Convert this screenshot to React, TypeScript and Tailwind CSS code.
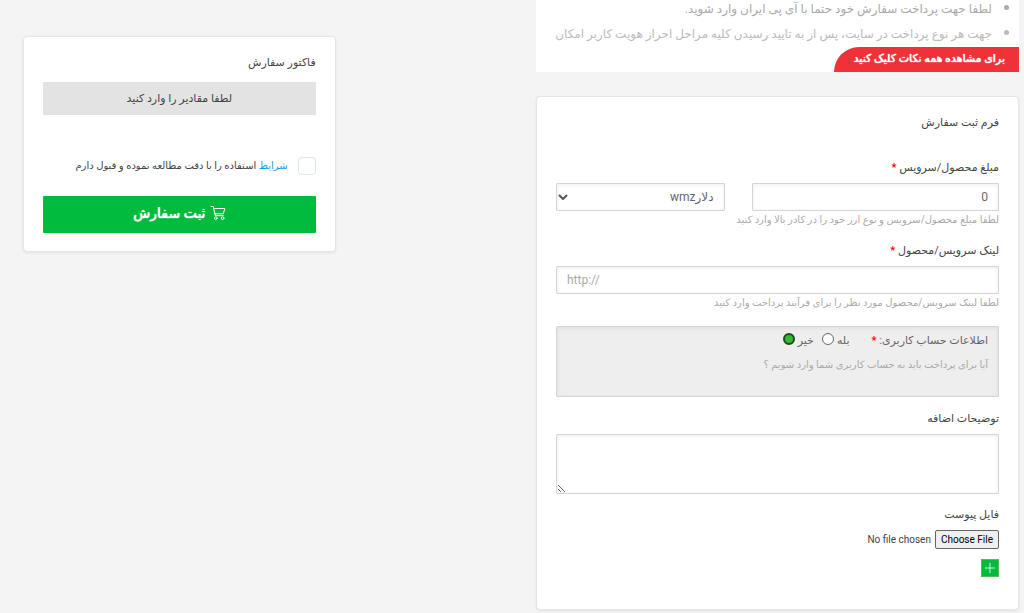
import { useState } from 'react';
import type { ReactNode } from 'react';

const notes = [
    'لطفا جهت پرداخت سفارش خود حتما با آی پی ایران وارد شوید.',
    'جهت هر نوع پرداخت در سایت، پس از به تایید رسیدن کلیه مراحل احراز هویت کاربر امکان',
];

const fieldClass =
    'block h-7 w-full rounded-[1px] border border-[#d5d5d5] bg-white px-[10px] text-xs text-[#666] shadow-[inset_0_1px_4px_rgba(0,0,0,0.07)] outline-none placeholder:text-[#aaa]';

interface FieldLabelProps {
    htmlFor: string;
    required?: boolean;
    children: ReactNode;
}

function FieldLabel({ htmlFor, required, children }: FieldLabelProps) {
    return (
        <label htmlFor={htmlFor} className="block w-fit text-[11px] leading-5 text-[#444]">
            {children}
            {required && <span className="font-bold text-[#f00]"> *</span>}
        </label>
    );
}

function HelpText({ children }: { children: ReactNode }) {
    return <p className="text-[10px] leading-[18px] whitespace-nowrap text-[#aaa]">{children}</p>;
}

function CartIcon() {
    return (
        <svg
            viewBox="0 0 16 16"
            className="h-4 w-4"
            fill="none"
            stroke="currentColor"
            strokeLinecap="round"
            strokeLinejoin="round"
            aria-hidden="true"
        >
            <path d="M1 1.5h2.2l2.1 9.2h8" />
            <path d="M3.7 3.5h11l-1.3 5.3H4.9" />
            <circle cx="5.8" cy="13.2" r="1.3" />
            <circle cx="12.6" cy="13.2" r="1.3" />
        </svg>
    );
}

function Notes() {
    return (
        <section className="flex flex-col bg-white">
            <ul className="list-disc pr-[27px] pb-px text-xs leading-6 text-[#aaa] marker:text-base">
                {notes.map((note, index) => (
                    <li key={note} className={index === 0 ? '-mt-1' : 'text-[#bbb]'}>
                        <span className="whitespace-nowrap">{note}</span>
                    </li>
                ))}
            </ul>
            <button
                type="button"
                className="h-[25px] w-[185px] rounded-tl-[26px] bg-[#ef3237] pr-[14px] text-right text-[11px] whitespace-nowrap text-white [text-shadow:0_0_1px_#fff,0_0_1px_#fff]"
            >
                برای مشاهده همه نکات کلیک کنید
            </button>
        </section>
    );
}

function OrderForm() {
    const [needsLogin, setNeedsLogin] = useState('no');

    return (
        <form className="mt-6 rounded-sm border border-[#e6e6e6] bg-white px-[19px] pt-4 pb-8 shadow-[0_1px_3px_rgba(0,0,0,0.08)]">
            <h2 className="text-[11px] leading-5 text-[#444]">فرم ثبت سفارش</h2>

            <div className="mt-[25px]">
                <FieldLabel htmlFor="amount" required>
                    مبلغ محصول/سرویس
                </FieldLabel>
                <div className="mt-[5px] flex gap-[27px]">
                    <div className="flex-[248]">
                        <input id="amount" type="text" defaultValue="0" className={fieldClass} />
                    </div>
                    <div className="relative flex-[169]">
                        <select aria-label="نوع ارز" className={`${fieldClass} appearance-none`}>
                            <option>دلارwmz</option>
                        </select>
                        <svg
                            viewBox="0 0 10 6"
                            className="pointer-events-none absolute top-[11px] left-[2px] h-[6px] w-[10px]"
                            fill="none"
                            stroke="#555"
                            strokeWidth="2"
                            aria-hidden="true"
                        >
                            <path d="M1 1l4 4 4-4" />
                        </svg>
                    </div>
                </div>
                <HelpText>لطفا مبلغ محصول/سرویس و نوع ارز خود را در کادر بالا وارد کنید</HelpText>
            </div>

            <div className="mt-3">
                <FieldLabel htmlFor="link" required>
                    لینک سرویس/محصول
                </FieldLabel>
                <input id="link" type="text" dir="ltr" placeholder="http://" className={`${fieldClass} mt-[5px]`} />
                <HelpText>لطفا لینک سرویس/محصول مورد نظر را برای فرآیند پرداخت وارد کنید</HelpText>
            </div>

            <div className="mt-[14px] rounded-[1px] border border-[#d5d5d5] bg-[#eee] px-[10px] pt-1 pb-[21px] shadow-[inset_0_1px_4px_rgba(0,0,0,0.07)]">
                <div className="flex items-center text-[11px] leading-5 text-[#666]">
                    <span className="ml-[22px]">
                        اطلاعات حساب کاربری: <span className="font-bold text-[#f00]">*</span>
                    </span>
                    {[
                        { value: 'yes', label: 'بله' },
                        { value: 'no', label: 'خیر' },
                    ].map((option) => (
                        <label key={option.value} className="ml-2 flex items-center gap-[3px]">
                            {option.label}
                            <input
                                type="radio"
                                name="needsLogin"
                                value={option.value}
                                checked={needsLogin === option.value}
                                onChange={() => setNeedsLogin(option.value)}
                                className="mb-1 h-3 w-3 appearance-none rounded-full border border-[#666] bg-white checked:border-2 checked:border-[#1d4a22] checked:bg-[#35b835]"
                            />
                        </label>
                    ))}
                </div>
                <p className="mt-1 text-[10px] leading-5 text-[#aaa]">
                    آیا برای پرداخت باید به حساب کاربری شما وارد شویم ؟
                </p>
            </div>

            <div className="mt-3">
                <FieldLabel htmlFor="description">توضیحات اضافه</FieldLabel>
                <textarea
                    id="description"
                    className="mt-[5px] block h-[60px] w-full rounded-[1px] border border-[#d5d5d5] bg-white p-2 text-xs text-[#666] shadow-[inset_0_1px_4px_rgba(0,0,0,0.07)] outline-none"
                />
            </div>

            <div className="mt-[11px]">
                <FieldLabel htmlFor="attachment">فایل پیوست</FieldLabel>
                <input
                    id="attachment"
                    type="file"
                    className="mt-[5px] block h-[19px] text-[10px] leading-[17px] text-[#444] file:ml-1 file:h-[19px] file:rounded-[2px] file:border file:border-solid file:border-[#666] file:bg-[#efefef] file:px-[5px] file:text-[10px] file:leading-4 file:font-normal file:text-black"
                />
                <button
                    type="button"
                    aria-label="افزودن فایل"
                    className="mt-[10px] flex h-[18px] w-[18px] items-center justify-center border border-[#5cb85c] bg-[#00bb3c] text-white"
                >
                    <svg viewBox="0 0 10 10" className="h-[10px] w-[10px]" stroke="currentColor" aria-hidden="true">
                        <path d="M5 0v10M0 5h10" strokeOpacity="0.8" />
                    </svg>
                </button>
            </div>
        </form>
    );
}

function Invoice() {
    return (
        <aside className="mt-9 w-[31.4%] rounded-sm border border-[#e6e6e6] bg-white px-[19px] pt-4 pb-[18px] shadow-[0_1px_3px_rgba(0,0,0,0.08)]">
            <h2 className="text-[11px] leading-5 text-[#444]">فاکتور سفارش</h2>
            <p className="mt-[9px] bg-[#e3e3e3] text-center text-[11px] leading-[33px] text-[#444]">
                لطفا مقادیر را وارد کنید
            </p>
            <div className="mt-[42px] flex items-center gap-[10px] text-[10px] leading-[18px] whitespace-nowrap text-[#444]">
                <input
                    id="terms"
                    type="checkbox"
                    className="h-[18px] w-[18px] shrink-0 appearance-none rounded-sm border border-[#dbe5ee] bg-white checked:bg-[#00bb3c]"
                />
                <label htmlFor="terms">
                    <a href="#terms" className="text-[#1a9be8]">
                        شرایط
                    </a>{' '}
                    استفاده را با دقت مطالعه نموده و قبول دارم
                </label>
            </div>
            <button
                type="submit"
                className="mt-[21px] flex h-[37px] w-full items-center justify-center gap-1 rounded-[1px] bg-[#00bb3c] pb-1 text-sm text-white [text-shadow:0_0_1px_#fff,0_0_1px_#fff]"
            >
                <CartIcon />
                ثبت سفارش
            </button>
        </aside>
    );
}

export default function App() {
    return (
        <div
            dir="rtl"
            className="flex min-h-screen items-start justify-between overflow-x-hidden bg-[#f4f4f4] pr-[5px] pl-[23px] font-[Roboto,'DejaVu_Sans',sans-serif]"
        >
            <main className="w-[48.5%]">
                <Notes />
                <OrderForm />
            </main>
            <Invoice />
        </div>
    );
}
